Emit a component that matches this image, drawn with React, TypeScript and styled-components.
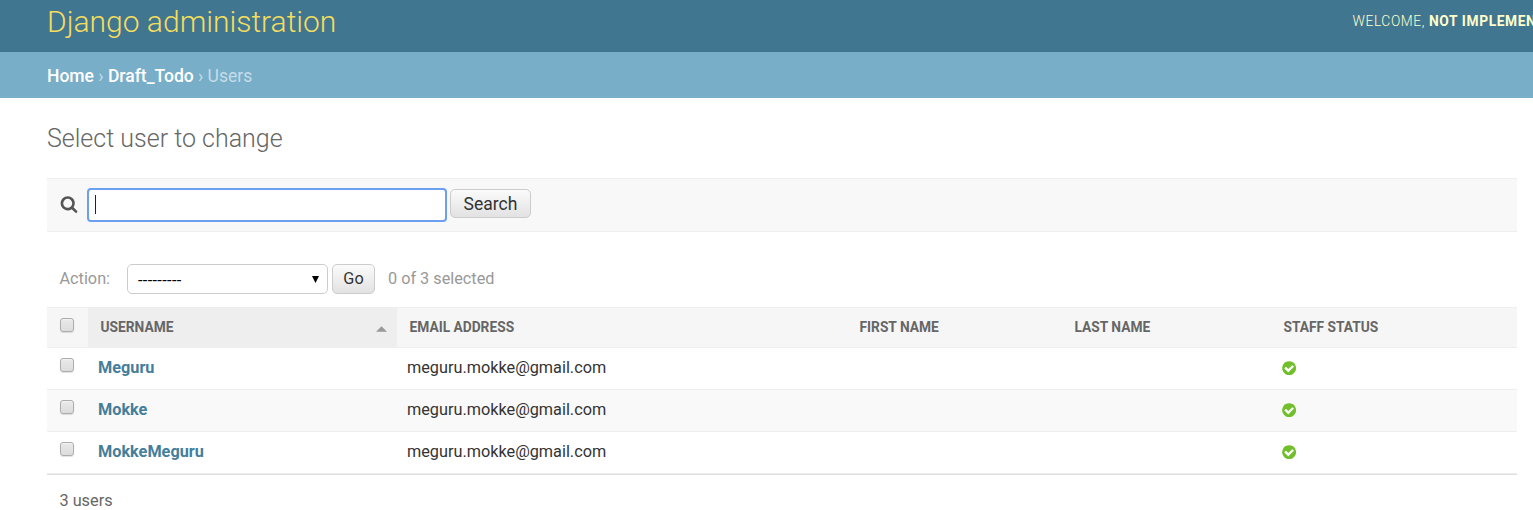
import React from 'react';
import styled, { createGlobalStyle } from 'styled-components';

const GlobalStyle = createGlobalStyle`
  * { box-sizing: border-box; }
  body {
    margin: 0;
    background: #fff;
    color: #333;
    font-family: Roboto, "Liberation Sans", sans-serif;
    font-size: 16.25px;
    overflow: hidden;
  }
`;

const Page = styled.div`
  height: 510px;
  overflow: hidden;
`;

const Header = styled.header`
  display: flex;
  justify-content: space-between;
  height: 52px;
  padding: 0 0 0 47px;
  background: #417690;
  overflow: hidden;
`;

const SiteName = styled.h1`
  margin: 0;
  color: #f5dd5d;
  font-size: 30px;
  font-weight: 300;
  line-height: 44px;
`;

const UserTools = styled.div`
  width: 180.5px;
  color: #ffc;
  font-size: 13.75px;
  font-weight: 300;
  letter-spacing: 0.625px;
  line-height: 42px;
  text-transform: uppercase;
  white-space: nowrap;

  strong { font-weight: 700; }
`;

const Breadcrumbs = styled.nav`
  height: 46px;
  padding-left: 47px;
  background: #79aec8;
  color: #c4dce8;
  font-size: 17.5px;
  line-height: 49px;
`;

const Crumb = styled.a`
  color: #fff;
  font-weight: 500;
`;

const Content = styled.main`
  padding: 0 16px 0 47px;
`;

const PageTitle = styled.h2`
  height: 80px;
  margin: 0;
  color: #666;
  font-size: 25px;
  font-weight: 300;
  line-height: 81px;
`;

const Toolbar = styled.form`
  display: flex;
  align-items: flex-start;
  height: 54px;
  padding: 9px 12px;
  border-top: 1px solid #eee;
  border-bottom: 1px solid #eee;
  background: #f8f8f8;
`;

const SearchGlyph = styled.svg`
  width: 18px;
  height: 18px;
  margin: 7px 9px 0 1px;
  fill: #555;
`;

const SearchField = styled.div`
  display: flex;
  align-items: center;
  width: 360px;
  height: 34px;
  margin-right: 3px;
  padding-left: 6px;
  border: 2px solid #6b9ff0;
  border-radius: 4px;
  background: #fff;
`;

const Caret = styled.span`
  width: 1px;
  height: 19px;
  margin-bottom: 1px;
  background: #222;
`;

const Button = styled.button<{ $width: number; $height: number; $size: number; $top?: number }>`
  width: ${p => p.$width}px;
  height: ${p => p.$height}px;
  margin: ${p => p.$top ?? 0}px 0 0;
  padding: ${p => (p.$top ? '1px 0 0' : '0 0 1px')};
  border: 1px solid #ccc;
  border-radius: 5px;
  background: linear-gradient(#fbfbfb, #e2e2e2);
  color: #333;
  font-family: inherit;
  font-size: ${p => p.$size}px;
`;

const Actions = styled.div`
  display: flex;
  align-items: center;
  height: 30px;
  margin: 32px 0 13px;
  padding-left: 12.5px;
  color: #999;
`;

const ActionLabel = styled.label`
  width: 67.5px;
  padding-bottom: 2px;
`;

const ActionSelect = styled.div`
  display: flex;
  align-items: center;
  justify-content: space-between;
  width: 201px;
  height: 30px;
  margin-right: 4px;
  padding: 0 8px 0 10px;
  border: 1px solid #ccc;
  border-radius: 5px;
  background: #fff;
  color: #000;
  letter-spacing: 0.35px;
`;

const SelectedOption = styled.span`
  padding-top: 2px;
`;

const DownArrow = styled.svg`
  width: 7px;
  height: 7px;
  fill: #000;
`;

const Counter = styled.span`
  margin-left: 13px;
  padding-bottom: 2px;
`;

const Table = styled.div`
  border-bottom: 1px solid #ddd;
`;

const columns = '41px 309px 450px 215px 209px 246px';

const HeadRow = styled.div`
  display: grid;
  grid-template-columns: ${columns};
  height: 41px;
  border-top: 1px solid #eee;
  border-bottom: 1px solid #eee;
  background: #f6f6f6;
`;

const HeadCell = styled.div<{ $sorted?: boolean }>`
  display: flex;
  align-items: center;
  justify-content: space-between;
  padding: 0 10px 1.5px 12.5px;
  background: ${p => (p.$sorted ? '#eee' : 'transparent')};
  color: #666;
  font-size: 13.75px;
  font-weight: 700;
  text-transform: uppercase;
`;

const SortArrow = styled.svg`
  width: 11px;
  height: 6px;
  margin-top: 5px;
  fill: #999;
`;

const Row = styled.div<{ $shaded: boolean }>`
  display: grid;
  grid-template-columns: ${columns};
  height: 42px;
  border-bottom: 1px solid #eee;
  background: ${p => (p.$shaded ? '#f9f9f9' : '#fff')};
`;

const Cell = styled.div`
  display: flex;
  align-items: center;
  padding: 0 10px;
  padding-bottom: 2px;
`;

const UserLink = styled.a`
  color: #447e9b;
  font-weight: 700;
`;

const CheckCell = styled.div<{ $top: number }>`
  padding: ${p => p.$top}px 0 0 13px;
`;

const Checkbox = styled.div`
  width: 14px;
  height: 14px;
  border: 1px solid #acacac;
  border-radius: 3px;
  background: linear-gradient(#e9e9e9, #dcdcdc);
  box-shadow: 0 1px 1px rgba(0, 0, 0, 0.12), inset 0 1px 1px rgba(255, 255, 255, 0.5);
`;

const YesIcon = styled.svg`
  width: 16.25px;
  height: 16.25px;
  margin: 2px 0 0 -0.2px;
  fill: #70bf2b;
`;

const Paginator = styled.p`
  margin: 0;
  padding: 16px 12.5px;
  color: #666;
  line-height: 20px;
`;

const users = ['Meguru', 'Mokke', 'MokkeMeguru'];

export default function App() {
  return (
    <Page>
      <GlobalStyle />
      <Header>
        <SiteName>Django administration</SiteName>
        <UserTools>
          Welcome, <strong>not implemented</strong>
        </UserTools>
      </Header>
      <Breadcrumbs>
        <Crumb>Home</Crumb> › <Crumb>Draft_Todo</Crumb> › Users
      </Breadcrumbs>
      <Content>
        <PageTitle>Select user to change</PageTitle>
        <Toolbar>
          <SearchGlyph viewBox="0 0 1792 1792">
            <path d="M1216 832q0-185-131.5-316.5t-316.5-131.5-316.5 131.5-131.5 316.5 131.5 316.5 316.5 131.5 316.5-131.5 131.5-316.5zm512 832q0 52-38 90t-90 38q-54 0-90-38l-343-342q-179 124-399 124-143 0-273.5-55.5t-225-150-150-225-55.5-273.5 55.5-273.5 150-225 225-150 273.5-55.5 273.5 55.5 225 150 150 225 55.5 273.5q0 220-124 399l343 343q37 37 37 90z" />
          </SearchGlyph>
          <SearchField>
            <Caret />
          </SearchField>
          <Button type="button" $width={81} $height={29} $size={17.5} $top={1}>Search</Button>
        </Toolbar>
        <Actions>
          <ActionLabel>Action:</ActionLabel>
          <ActionSelect>
            <SelectedOption>---------</SelectedOption>
            <DownArrow viewBox="0 0 7 7">
              <path d="M0 0H7L3.5 7Z" />
            </DownArrow>
          </ActionSelect>
          <Button type="button" $width={43} $height={30} $size={16.25}>Go</Button>
          <Counter>0 of 3 selected</Counter>
        </Actions>
        <Table>
          <HeadRow>
            <CheckCell $top={10}><Checkbox /></CheckCell>
            <HeadCell $sorted>
              Username
              <SortArrow viewBox="0 0 10 5">
                <path d="M0 5L5 0L10 5Z" />
              </SortArrow>
            </HeadCell>
            <HeadCell>Email address</HeadCell>
            <HeadCell>First name</HeadCell>
            <HeadCell>Last name</HeadCell>
            <HeadCell>Staff status</HeadCell>
          </HeadRow>
          {users.map((name, i) => (
            <Row key={name} $shaded={i % 2 === 1}>
              <CheckCell $top={10}><Checkbox /></CheckCell>
              <Cell><UserLink>{name}</UserLink></Cell>
              <Cell>meguru.mokke@gmail.com</Cell>
              <Cell />
              <Cell />
              <Cell>
                <YesIcon viewBox="0 0 1792 1792">
                  <path d="M1412 734q0-28-18-46l-91-90q-19-19-45-19t-45 19l-408 407-226-226q-19-19-45-19t-45 19l-91 90q-18 18-18 46 0 27 18 45l362 362q19 19 45 19 27 0 46-19l543-543q18-18 18-45zm252 162q0 209-103 385.5t-279.5 279.5-385.5 103-385.5-103-279.5-279.5-103-385.5 103-385.5 279.5-279.5 385.5-103 385.5 103 279.5 279.5 103 385.5z" />
                </YesIcon>
              </Cell>
            </Row>
          ))}
        </Table>
        <Paginator>3 users</Paginator>
      </Content>
    </Page>
  );
}
